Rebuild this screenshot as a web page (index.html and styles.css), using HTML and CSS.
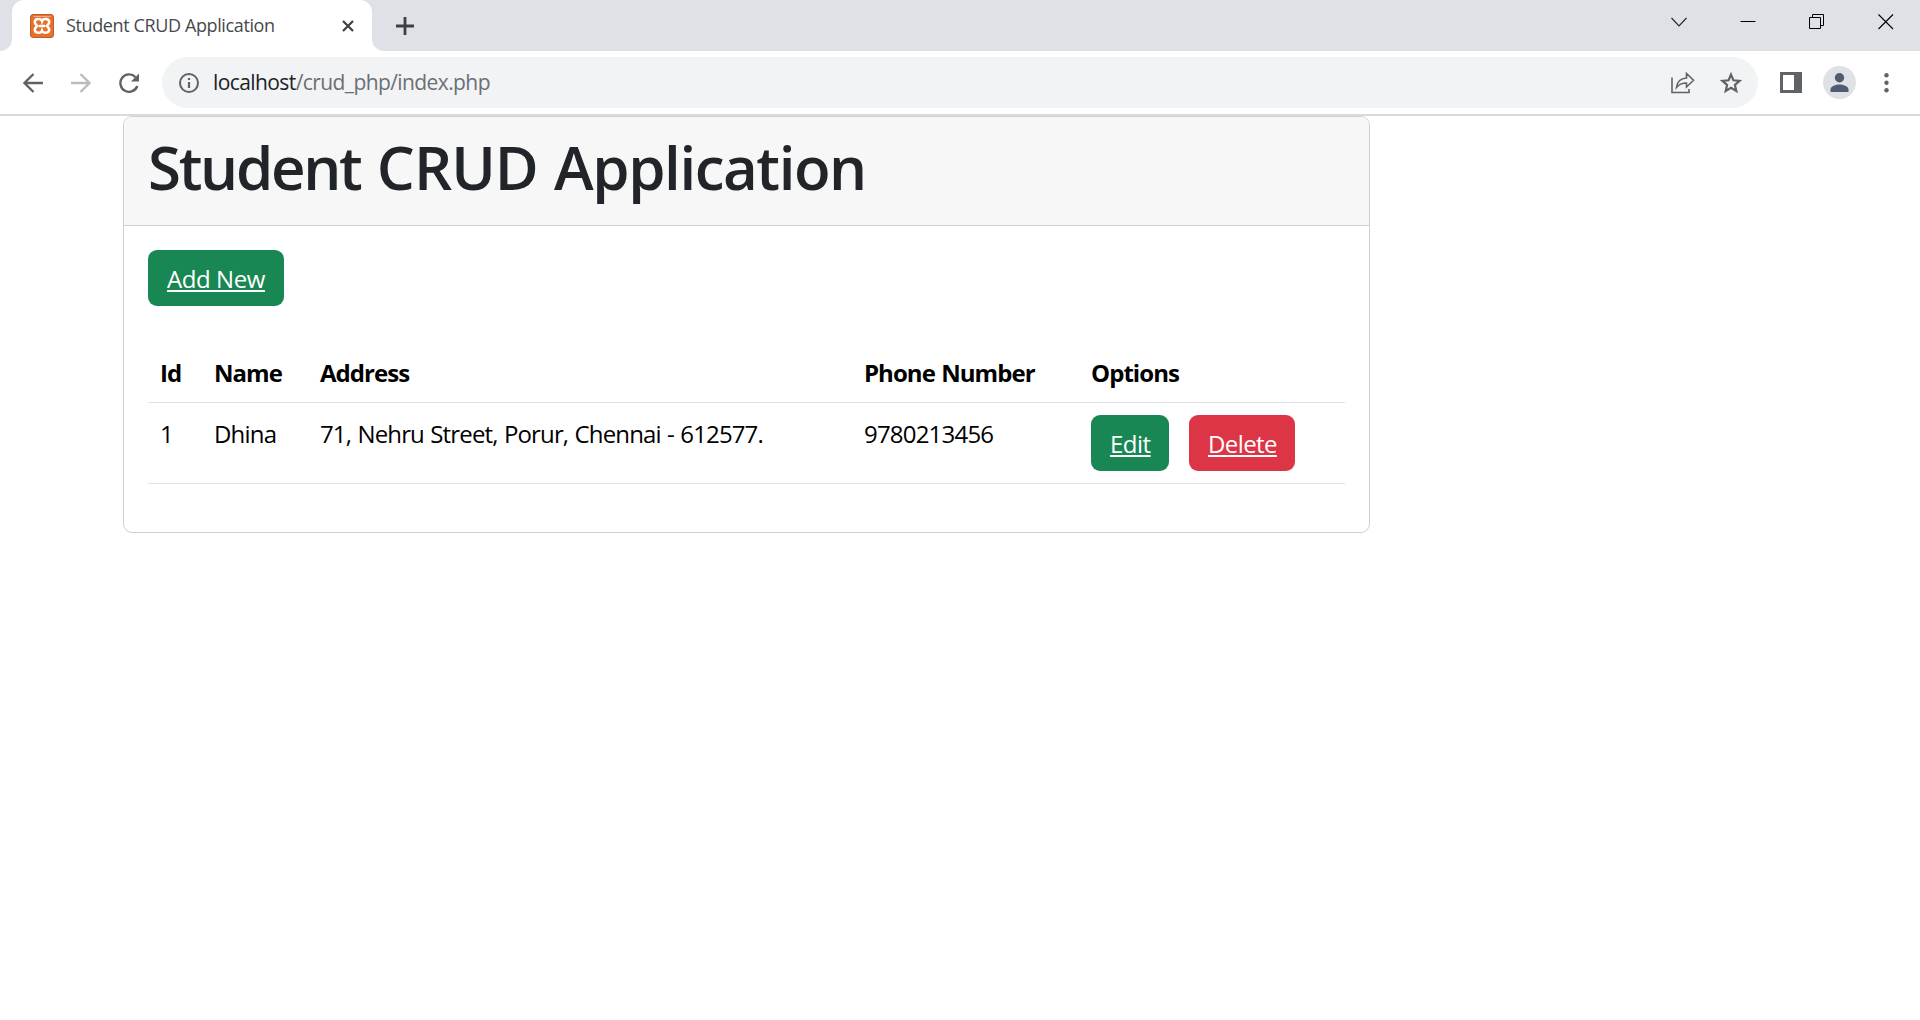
FILE: index.html
```html
<!DOCTYPE html>
<html lang="en">
<head>
<meta charset="utf-8">
<title>Student CRUD Application</title>
<link rel="stylesheet" href="styles.css">
</head>
<body>
<header class="tabstrip">
  <svg class="flare flare-left" viewBox="0 0 12 12"><path d="M12 0V12H0A12 12 0 0 0 12 0Z" fill="#fff"/></svg>
  <div class="tab">
    <svg class="favicon" viewBox="0 0 24 24">
      <rect x=".5" y=".5" width="23" height="23" rx="2.5" fill="#e8702a" stroke="#bd5f2c"/>
      <path d="M3.5 2.500H20.5" stroke="#f5ad80" stroke-width="1"/>
      <path d="M12 7.200C11 4.400 4.800 4 4.800 8.300C4.800 10.500 6.800 10.500 6.800 11.900C6.800 13.300 4.800 13.300 4.800 15.500C4.800 19.800 11 19.400 12 16.600C13 19.400 19.200 19.800 19.200 15.500C19.200 13.300 17.200 13.300 17.200 11.900C17.200 10.500 19.200 10.500 19.200 8.300C19.200 4 13 4.400 12 7.200ZM9.500 11.900H14.500" fill="none" stroke="#fff" stroke-width="2.500" stroke-linecap="round"/>
    </svg>
    <span class="tab-title">Student CRUD Application</span>
    <svg class="tab-close" viewBox="0 0 12 12"><path d="M1 1L11 11M11 1L1 11" stroke="#3c4043" stroke-width="2.200"/></svg>
  </div>
  <svg class="flare" viewBox="0 0 12 12"><path d="M0 0V12H12A12 12 0 0 1 0 0Z" fill="#fff"/></svg>
  <svg class="new-tab" viewBox="0 0 18 18"><path d="M9 0V18M0 9H18" stroke="#3c4043" stroke-width="2.800"/></svg>
  <div class="window-controls">
    <svg viewBox="0 0 16 16"><path d="M.5 4L8 12L15.500 4" fill="none" stroke="#222" stroke-width="1.100"/></svg>
    <svg viewBox="0 0 16 16"><path d="M.5 7.500H15.500" stroke="#000"/></svg>
    <svg viewBox="0 0 16 16"><path d="M.5 3.500H11.500V14.500H.5ZM3.500 3.500V.5H14.500V11.500H11.500" fill="none" stroke="#000"/></svg>
    <svg viewBox="0 0 16 16"><path d="M.5 .5L15 15M15 .5L.5 15" stroke="#000" stroke-width="1.100"/></svg>
  </div>
</header>
<nav class="toolbar">
  <svg class="nav-icon" viewBox="0 0 20 20"><path d="M20 10H1.500M10.500 1L1.500 10L10.500 19" fill="none" stroke="#5f6368" stroke-width="2.300"/></svg>
  <svg class="nav-icon" viewBox="0 0 20 20"><path d="M0 10H18.500M9.500 1L18.500 10L9.500 19" fill="none" stroke="#babcbe" stroke-width="2.300"/></svg>
  <svg class="nav-icon reload" viewBox="0 0 20 20"><path d="M18.300 13A8.700 8.700 0 1 1 16.400 4.100" fill="none" stroke="#5f6368" stroke-width="2.400"/><path d="M20 .5V8.500H12Z" fill="#5f6368"/></svg>
  <div class="omnibox">
    <svg class="info" viewBox="0 0 20 20"><circle cx="10" cy="10" r="9" fill="none" stroke="#5f6368" stroke-width="2"/><path d="M10 5V7M10 9V15" stroke="#5f6368" stroke-width="2.200"/></svg>
    <span class="url"><span class="host">localhost</span>/crud_php/index.php</span>
    <svg class="share" viewBox="0 0 24 22"><path d="M1 5.500V20.500H18V17M5.500 15.500C6 9.500 9.500 6.500 15.500 6V1.500L22.500 8.300L15.500 15V11C11 11 8 12.300 5.500 15.500Z" fill="none" stroke="#5f6368" stroke-width="1.600"/></svg>
    <svg class="star" viewBox="0 0 22 22"><path d="M11 2.600L13.400 8.300L19.600 8.800L14.900 12.900L16.300 19L11 15.700L5.700 19L7.100 12.900L2.400 8.800L8.600 8.300Z" fill="none" stroke="#5f6368" stroke-width="2.200"/></svg>
  </div>
  <svg class="side-panel" viewBox="0 0 22 21"><path d="M0 0H22V21H0ZM3 3V18H14V3Z" fill="#5f6368" fill-rule="evenodd"/></svg>
  <svg class="avatar" viewBox="0 0 33 33"><circle cx="16.500" cy="16.500" r="16.500" fill="#dee1e6"/><circle cx="16.500" cy="11.700" r="4.700" fill="#525c70"/><path d="M7.500 26V23.500C7.500 20 13 18.500 16.500 18.500S25.500 20 25.500 23.500V26Z" fill="#525c70"/></svg>
  <svg class="menu" viewBox="0 0 5 20"><g fill="#5f6368"><circle cx="2.500" cy="2.300" r="2.200"/><circle cx="2.500" cy="9.800" r="2.200"/><circle cx="2.500" cy="17.300" r="2.200"/></g></svg>
</nav>
<main class="page">
  <section class="card">
    <div class="card-header"><h1><span class="word-tight">Student</span> <span class="word-wide">CRUD</span> Application</h1></div>
    <div class="card-body">
      <button class="btn btn-success add"><a href="#">Add New</a></button>
      <table class="table">
        <colgroup><col class="col-id"><col class="col-name"><col class="col-address"><col class="col-phone"><col></colgroup>
        <thead><tr><th>Id</th><th>Name</th><th>Address</th><th>Phone Number</th><th>Options</th></tr></thead>
        <tbody><tr>
          <td>1</td><td>Dhina</td><td class="address">71, Nehru Street, Porur, Chennai - 612577.</td><td>9780213456</td>
          <td class="options-cell"><div class="options"><button class="btn btn-success edit"><a href="#">Edit</a></button><button class="btn btn-danger delete"><a href="#">Delete</a></button></div></td>
        </tr></tbody>
      </table>
    </div>
  </section>
</main>
</body>
</html>
```
FILE: styles.css
```css
* { box-sizing: border-box; }

body {
  margin: 0;
  background: #fff;
  font-family: "Open Sans", "Noto Sans", sans-serif;
  overflow: hidden;
}

svg { display: block; flex: none; }

/* Tab strip */
.tabstrip {
  display: flex;
  height: 51px;
  background: #dee1e6;
}

.flare { width: 12px; height: 12px; align-self: flex-end; }

.tab {
  display: flex;
  align-items: center;
  width: 360px;
  height: 51px;
  padding: 0 18px;
  border-radius: 12px 12px 0 0;
  background: #fff;
}

.favicon { width: 24px; height: 24px; }

.tab-title {
  flex: 1;
  margin-left: 12px;
  padding-bottom: 1px;
  font-size: 18px;
  letter-spacing: -0.38px;
  line-height: 24px;
  color: #45494d;
  white-space: nowrap;
}

.tab-close { width: 12px; height: 12px; }

.new-tab { width: 18px; height: 18px; margin: 17px 0 0 12px; }

.window-controls {
  display: flex;
  gap: 53px;
  margin: 14px 26px 0 auto;
}

.window-controls svg { width: 16px; height: 16px; }

/* Toolbar */
.toolbar {
  display: flex;
  align-items: center;
  height: 65px;
  padding: 0 31px 0 23px;
  border-bottom: 2px solid #dadada;
}

.nav-icon { width: 20px; height: 20px; margin-right: 28px; }
.nav-icon.reload { margin-right: 23px; }

.omnibox {
  display: flex;
  align-items: center;
  flex: 1;
  height: 51px;
  padding: 0 16px 0 17px;
  border-radius: 26px;
  background: #f1f3f4;
}

.info { width: 20px; height: 20px; }

.url {
  flex: 1;
  margin-left: 14px;
  padding-bottom: 1px;
  font-size: 21px;
  letter-spacing: -0.59px;
  line-height: 30px;
  color: #6b6f74;
}

.host { color: #202124; }

.share { width: 24px; height: 22px; margin-right: 25px; }
.star { width: 22px; height: 22px; }
.side-panel { width: 22px; height: 21px; margin-left: 22px; }
.avatar { width: 33px; height: 33px; margin-left: 21px; }
.menu { width: 5px; height: 20px; margin-left: 28px; }

/* Page content */
.page { padding-left: 123px; }

.card {
  width: 1247px;
  border: 1px solid #cfcfcf;
  border-radius: 9px;
}

.card-header {
  height: 109px;
  padding: 14px 24px 0;
  border-bottom: 1px solid #cfcfcf;
  border-radius: 8px 8px 0 0;
  background: #f7f7f7;
}

h1 {
  margin: 0;
  font-size: 60px;
  font-weight: 600;
  line-height: 72px;
  letter-spacing: -1.45px;
  word-spacing: 2.2px;
  color: #212529;
}

.word-tight { letter-spacing: -2.3px; }
.word-wide { letter-spacing: -1px; }

.card-body {
  padding: 24px 24px 48px;
  font-size: 24px;
  line-height: 36px;
  letter-spacing: -0.8px;
}

.btn {
  display: block;
  height: 56px;
  padding: 2px 19px 0;
  border: 0;
  border-radius: 9px;
  font: inherit;
  letter-spacing: -0.6px;
  line-height: 36px;
}

.btn a {
  color: #fff;
  text-decoration: underline;
  text-decoration-thickness: 2px;
  text-underline-offset: 2px;
  text-decoration-skip-ink: none;
}

.btn-success { background: #198754; }
.btn-danger { background: #dc3545; }
.add { width: 136px; margin-bottom: 36px; letter-spacing: -0.45px; }
.edit { width: 78px; letter-spacing: -0.5px; }
.delete { width: 106px; }

.options { display: flex; gap: 20px; }

.table {
  width: 1197px;
  table-layout: fixed;
  border-collapse: separate;
  border-spacing: 0;
}

.col-id { width: 54px; }
.col-name { width: 106px; }
.col-address { width: 544px; }
.col-phone { width: 227px; }

th, td {
  padding: 13px 0 11px 12px;
  border-bottom: 1px solid #dee2e6;
  text-align: left;
  vertical-align: top;
  white-space: nowrap;
  word-spacing: 1px;
}

.address { letter-spacing: -0.86px; }
.options-cell { padding: 12px 0 12px 12px; }

th { font-weight: 700; letter-spacing: -0.95px; }
```
